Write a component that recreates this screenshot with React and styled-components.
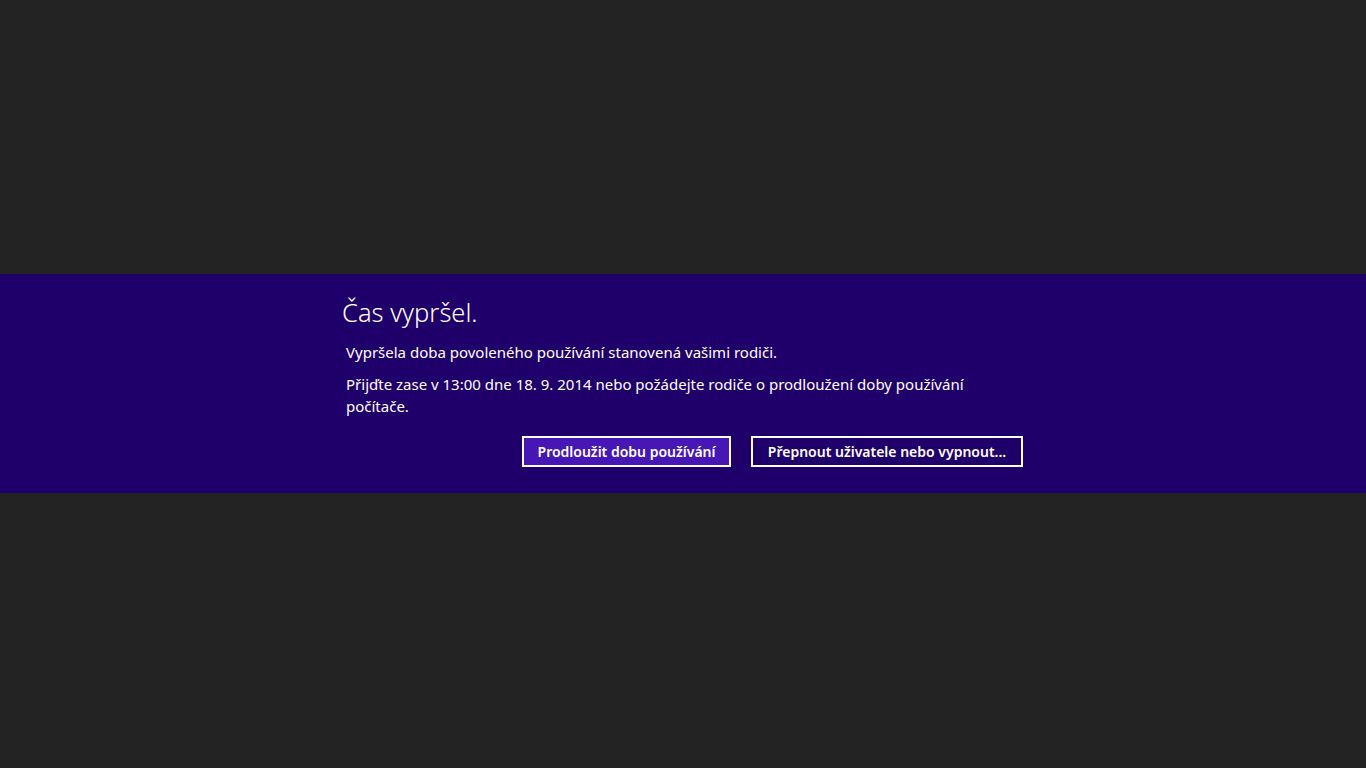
import React from "react";
import styled, { createGlobalStyle } from "styled-components";

const Global = createGlobalStyle`
  html, body { margin: 0; padding: 0; background: #232323; }
  body { font-family: "Noto Sans", "Open Sans", sans-serif; color: #fff; }
`;

const Screen = styled.div`
  height: 768px;
  display: flex;
  flex-direction: column;
  justify-content: flex-start;
  padding-top: 274px;
  box-sizing: border-box;
`;

const Band = styled.section`
  height: 219px;
  background: #1f006a;
  display: flex;
  justify-content: center;
`;

const Content = styled.div`
  width: 681px;
  margin-left: -1px;
  padding-top: 18px;
  display: flex;
  flex-direction: column;
`;

const Title = styled.h1`
  margin: 0;
  font-size: 25.5px;
  font-weight: 300;
  line-height: 40px;
  letter-spacing: 0;
`;

const Text = styled.p`
  margin: 0 0 0 4px;
  font-size: 15px;
  line-height: 22px;
  max-width: 650px;
  margin-top: ${p => p.$top}px;
`;

const Actions = styled.div`
  display: flex;
  justify-content: flex-end;
  gap: 20px;
  margin-top: 19px;
`;

const Button = styled.button`
  height: 31px;
  box-sizing: border-box;
  border: 2px solid #fff;
  background: ${p => (p.$primary ? "#4617b4" : "#1f006a")};
  color: #fff;
  font-family: inherit;
  font-size: 14px;
  font-weight: 600;
  padding: 0;
  white-space: nowrap;
  width: ${p => p.$w}px;
`;

export default function App() {
  return (
    <>
      <Global />
      <Screen>
        <Band>
          <Content>
            <Title>Čas vypršel.</Title>
            <Text $top={9}>Vypršela doba povoleného používání stanovená vašimi rodiči.</Text>
            <Text $top={10}>
              Přijďte zase v 13:00 dne 18. 9. 2014 nebo požádejte rodiče o prodloužení doby používání počítače.
            </Text>
            <Actions>
              <Button $primary $w={209}>Prodloužit dobu používání</Button>
              <Button $w={272}>Přepnout uživatele nebo vypnout...</Button>
            </Actions>
          </Content>
        </Band>
      </Screen>
    </>
  );
}
